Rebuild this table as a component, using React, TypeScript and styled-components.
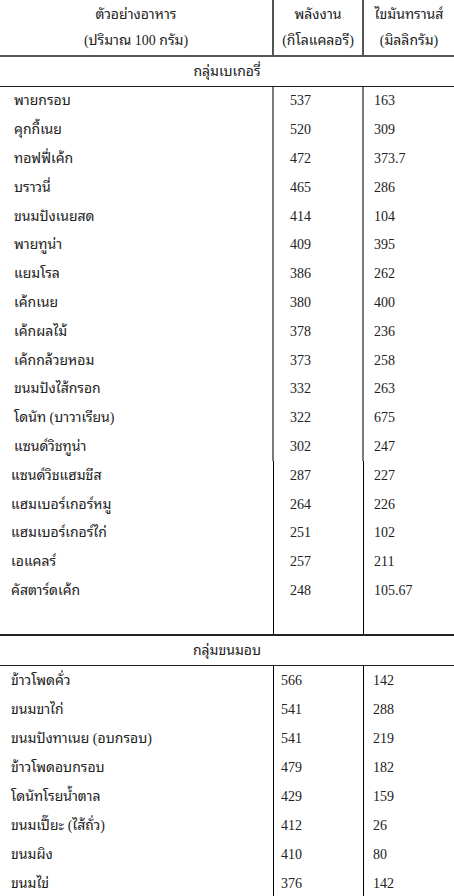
import * as React from 'react';
import styled, { createGlobalStyle } from 'styled-components';

type Tone = 'grey' | 'black';
type Item = [string, string, string];

const bakery: Item[] = [
    ['พายกรอบ', '537', '163'],
    ['คุกกี้เนย', '520', '309'],
    ['ทอฟฟี่เค้ก', '472', '373.7'],
    ['บราวนี่', '465', '286'],
    ['ขนมปังเนยสด', '414', '104'],
    ['พายทูน่า', '409', '395'],
    ['แยมโรล', '386', '262'],
    ['เค้กเนย', '380', '400'],
    ['เค้กผลไม้', '378', '236'],
    ['เค้กกล้วยหอม', '373', '258'],
    ['ขนมปังไส้กรอก', '332', '263'],
    ['โดนัท (บาวาเรียน)', '322', '675'],
    ['แซนด์วิชทูน่า', '302', '247'],
    ['แซนด์วิชแฮมชีส', '287', '227'],
    ['แฮมเบอร์เกอร์หมู', '264', '226'],
    ['แฮมเบอร์เกอร์ไก่', '251', '102'],
    ['เอแคลร์', '257', '211'],
    ['คัสตาร์ดเค้ก', '248', '105.67'],
];

const baked: Item[] = [
    ['ข้าวโพดคั่ว', '566', '142'],
    ['ขนมขาไก่', '541', '288'],
    ['ขนมปังทาเนย (อบกรอบ)', '541', '219'],
    ['ข้าวโพดอบกรอบ', '479', '182'],
    ['โดนัทโรยน้ำตาล', '429', '159'],
    ['ขนมเปี๊ยะ (ไส้ถั่ว)', '412', '26'],
    ['ขนมผิง', '410', '80'],
    ['ขนมไข่', '376', '142'],
];

export default () => {
    return (
        <Sheet>
            <GlobalStyle />
            <Head>
                <HeadCell>
                    <span>ตัวอย่างอาหาร</span>
                    <span>(ปริมาณ 100 กรัม)</span>
                </HeadCell>
                <HeadCell>
                    <span>พลังงาน</span>
                    <span>(กิโลแคลอรี)</span>
                </HeadCell>
                <HeadCell>
                    <span>ไขมันทรานส์</span>
                    <span>(มิลลิกรัม)</span>
                </HeadCell>
            </Head>

            <Group>กลุ่มเบเกอรี่</Group>
            {bakery.map(([name, kcal, fat], i) => {
                const tone: Tone = i < 13 ? 'grey' : 'black';
                return (
                    <Row key={name} height={28.8}>
                        <Name tone={tone}>{name}</Name>
                        <Num tone={tone} indent={16}>
                            {kcal}
                        </Num>
                        <Num tone={tone} indent={10} last>
                            {fat}
                        </Num>
                    </Row>
                );
            })}
            <Row height={28.8}>
                <Name tone={'black'} />
                <Num tone={'black'} indent={16} />
                <Num tone={'black'} indent={10} last />
            </Row>

            <Group top>กลุ่มขนมอบ</Group>
            {baked.map(([name, kcal, fat]) => (
                <Row key={name} height={29}>
                    <Name tone={'black'}>{name}</Name>
                    <Num tone={'black'} indent={7}>
                        {kcal}
                    </Num>
                    <Num tone={'black'} indent={9} last>
                        {fat}
                    </Num>
                </Row>
            ))}
        </Sheet>
    );
};

const GlobalStyle = createGlobalStyle`
    body {
        margin: 0;
        background: #ffffff;
    }
`;

const Sheet = styled.div`
    width: 454px;
    height: 896px;
    overflow: hidden;
    color: #222222;
    font: 14px/1 'Liberation Serif', 'Noto Sans Thai Looped', 'Noto Serif Thai', 'Tlwg Typo', Garuda,
        Loma, 'Noto Sans Thai', serif;
`;

const Head = styled.div`
    display: grid;
    grid-template-columns: 274px 90px 1fr;
    height: 57px;
    border-bottom: 2px solid #555555;
    box-sizing: border-box;
`;

const HeadCell = styled.div`
    display: flex;
    flex-direction: column;
    align-items: center;
    justify-content: center;
    gap: 12px;
    border-right: 2px solid #555555;
    box-sizing: border-box;

    &:last-child {
        border-right: 0;
    }
`;

const Group = styled.div<{ top?: boolean }>`
    height: ${({ top }) => (top ? '32px' : '30px')};
    display: flex;
    align-items: center;
    justify-content: center;
    box-sizing: border-box;
    border-bottom: 1px solid #222222;
    border-top: ${({ top }) => (top ? '2px solid #222222' : '0')};
`;

const Row = styled.div<{ height: number }>`
    display: grid;
    grid-template-columns: 274px 90px 1fr;
    height: ${({ height }) => height}px;
`;

const Name = styled.div<{ tone: Tone }>`
    display: flex;
    align-items: center;
    padding-left: ${({ tone }) => (tone === 'grey' ? '14px' : '11px')};
    border-right: ${({ tone }) => (tone === 'grey' ? '2px solid #7a7a7a' : '1px solid #000000')};
    box-sizing: border-box;
`;

const Num = styled.div<{ tone: Tone; indent: number; last?: boolean }>`
    display: flex;
    align-items: center;
    padding-left: ${({ indent }) => indent}px;
    border-right: ${({ tone, last }) =>
        last ? '0' : tone === 'grey' ? '2px solid #7a7a7a' : '1px solid #000000'};
    box-sizing: border-box;
`;
